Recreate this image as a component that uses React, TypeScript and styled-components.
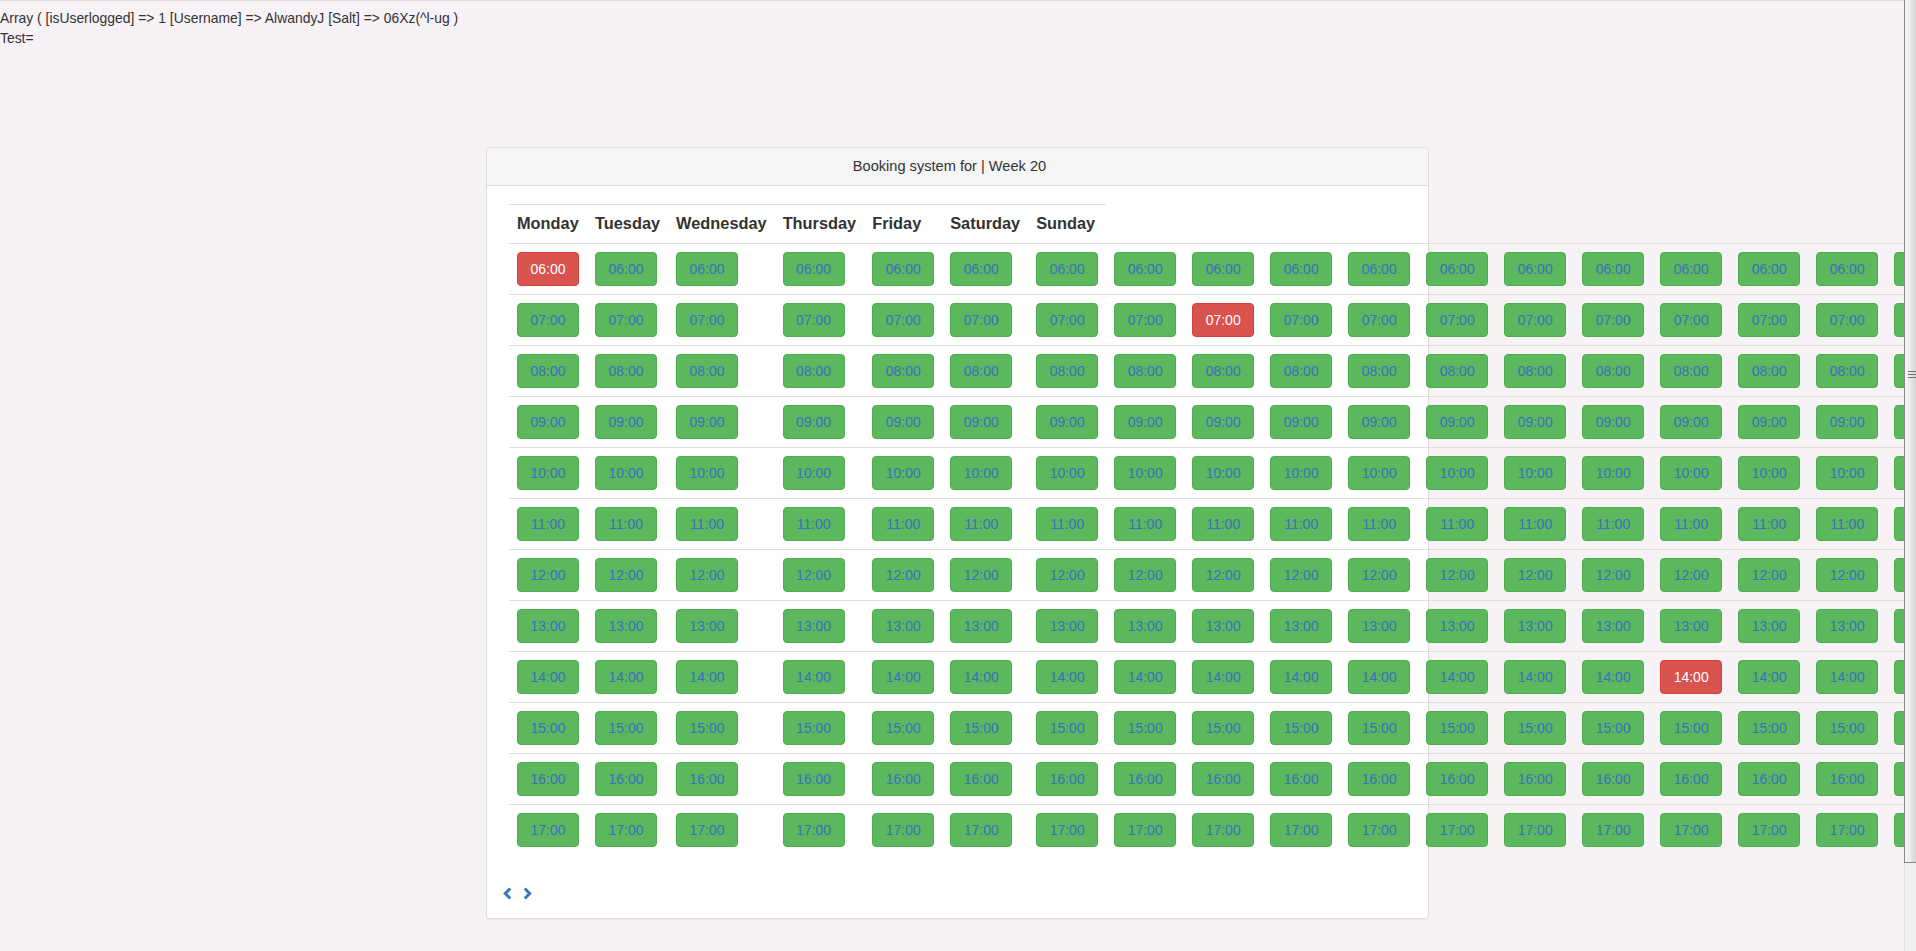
import React from "react";
import styled, { createGlobalStyle } from "styled-components";

const GlobalStyle = createGlobalStyle`
	html,
	body {
		margin: 0;
		padding: 0;
		overflow: hidden;
		background: #f6f2f6;
		font-family: "Liberation Sans", Arial, sans-serif;
		font-size: 14px;
		line-height: 20px;
		color: #333;
	}
`;

const days = [
	"Monday",
	"Tuesday",
	"Wednesday",
	"Thursday",
	"Friday",
	"Saturday",
	"Sunday",
];

const hours = [
	"06:00",
	"07:00",
	"08:00",
	"09:00",
	"10:00",
	"11:00",
	"12:00",
	"13:00",
	"14:00",
	"15:00",
	"16:00",
	"17:00",
];

// row index -> column index of the booked slot
const booked: Record<number, number> = { 0: 0, 1: 8, 8: 14 };

const COLUMNS = 20;

const Viewport = styled.div`
	display: flex;
	height: 100vh;
	overflow: hidden;
`;

const Page = styled.div`
	flex: 1;
	min-width: 0;
	overflow: hidden;
	border-top: 1px solid #dcdcdc;
	padding-top: 7px;
`;

const DebugOutput = styled.div`
	font-size: 13.9px;
	line-height: 20px;
	color: #333;
	white-space: nowrap;
`;

const Panel = styled.div`
	box-sizing: border-box;
	width: 943px;
	margin: 99px 0 0 486px;
	background: #fff;
	border: 1px solid #ddd;
	border-radius: 4px;
	box-shadow: 0 1px 1px rgba(0, 0, 0, 0.05);
`;

const PanelHeading = styled.div`
	padding: 8px 31px 9px 15px;
	font-size: 14.6px;
	line-height: 20px;
	text-align: center;
	color: #333;
	background: #f5f5f5;
	border-bottom: 1px solid #ddd;
	border-radius: 3px 3px 0 0;
`;

const PanelBody = styled.div`
	padding: 18px 0 18px 16px;
`;

const Table = styled.table`
	border-collapse: collapse;
	border-spacing: 0;
	margin-left: 6px;
`;

const DayHead = styled.th`
	padding: 7px 8px 9px;
	font-size: 16.35px;
	font-weight: bold;
	line-height: 22px;
	text-align: left;
	white-space: nowrap;
	color: #333;
	border-top: 1px solid #ddd;
	vertical-align: bottom;
`;

const Cell = styled.td`
	padding: 8px;
	border-top: 1px solid #ddd;
	vertical-align: top;
`;

const SlotButton = styled.a<{ $booked?: boolean }>`
	display: block;
	box-sizing: border-box;
	width: 62px;
	padding: 6px 0;
	font-size: 14px;
	line-height: 20px;
	text-align: center;
	text-decoration: none;
	border-radius: 4px;
	border: 1px solid ${(p) => (p.$booked ? "#d43f3a" : "#4cae4c")};
	background: ${(p) => (p.$booked ? "#d9534f" : "#5cb85c")};
	color: ${(p) => (p.$booked ? "#fff" : "#3a6fc1")};
	cursor: pointer;
`;

const Pager = styled.div`
	display: flex;
	gap: 11px;
	margin-top: 32px;
	height: 13px;
`;

const Chevron = styled.svg`
	display: block;
	width: 9px;
	height: 13px;
	cursor: pointer;
`;

const ScrollTrack = styled.div`
	flex: none;
	width: 12px;
	background: #f0f0f0;
	border-left: 1px solid #e4e4e4;
	box-sizing: border-box;
`;

const ScrollThumb = styled.div`
	box-sizing: border-box;
	height: 863px;
	margin-left: -1px;
	border-left: 1px solid #8a8a8a;
	border-bottom: 1px solid #8a8a8a;
	background: linear-gradient(to right, #f6f6f6 0%, #ededed 45%, #d2d2d2 100%);
	padding-top: 371px;
`;

const Grip = styled.div`
	width: 8px;
	height: 7px;
	margin-left: 3px;
	background: repeating-linear-gradient(
		to bottom,
		#6f6f6f 0,
		#6f6f6f 1px,
		transparent 1px,
		transparent 3px
	);
`;

export default function App() {
	return (
		<>
			<GlobalStyle />
			<Viewport>
				<Page>
					<DebugOutput>
						Array ( [isUserlogged] =&gt; 1 [Username] =&gt; AlwandyJ [Salt] =&gt;
						06Xz(^l-ug )
						<br />
						Test=
					</DebugOutput>
					<Panel>
						<PanelHeading>Booking system for | Week 20</PanelHeading>
						<PanelBody>
							<Table>
								<thead>
									<tr>
										{days.map((day) => (
											<DayHead key={day}>{day}</DayHead>
										))}
									</tr>
								</thead>
								<tbody>
									{hours.map((hour, row) => (
										<tr key={hour}>
											{Array.from({ length: COLUMNS }, (_, col) => (
												<Cell key={col}>
													<SlotButton $booked={booked[row] === col}>{hour}</SlotButton>
												</Cell>
											))}
										</tr>
									))}
								</tbody>
							</Table>
							<Pager>
								<Chevron viewBox="0 0 9 13">
									<polyline
										points="7.2,1.5 2.3,6.5 7.2,11.5"
										fill="none"
										stroke="#337ab7"
										strokeWidth="3"
									/>
								</Chevron>
								<Chevron viewBox="0 0 9 13">
									<polyline
										points="1.8,1.5 6.7,6.5 1.8,11.5"
										fill="none"
										stroke="#337ab7"
										strokeWidth="3"
									/>
								</Chevron>
							</Pager>
						</PanelBody>
					</Panel>
				</Page>
				<ScrollTrack>
					<ScrollThumb>
						<Grip />
					</ScrollThumb>
				</ScrollTrack>
			</Viewport>
		</>
	);
}
